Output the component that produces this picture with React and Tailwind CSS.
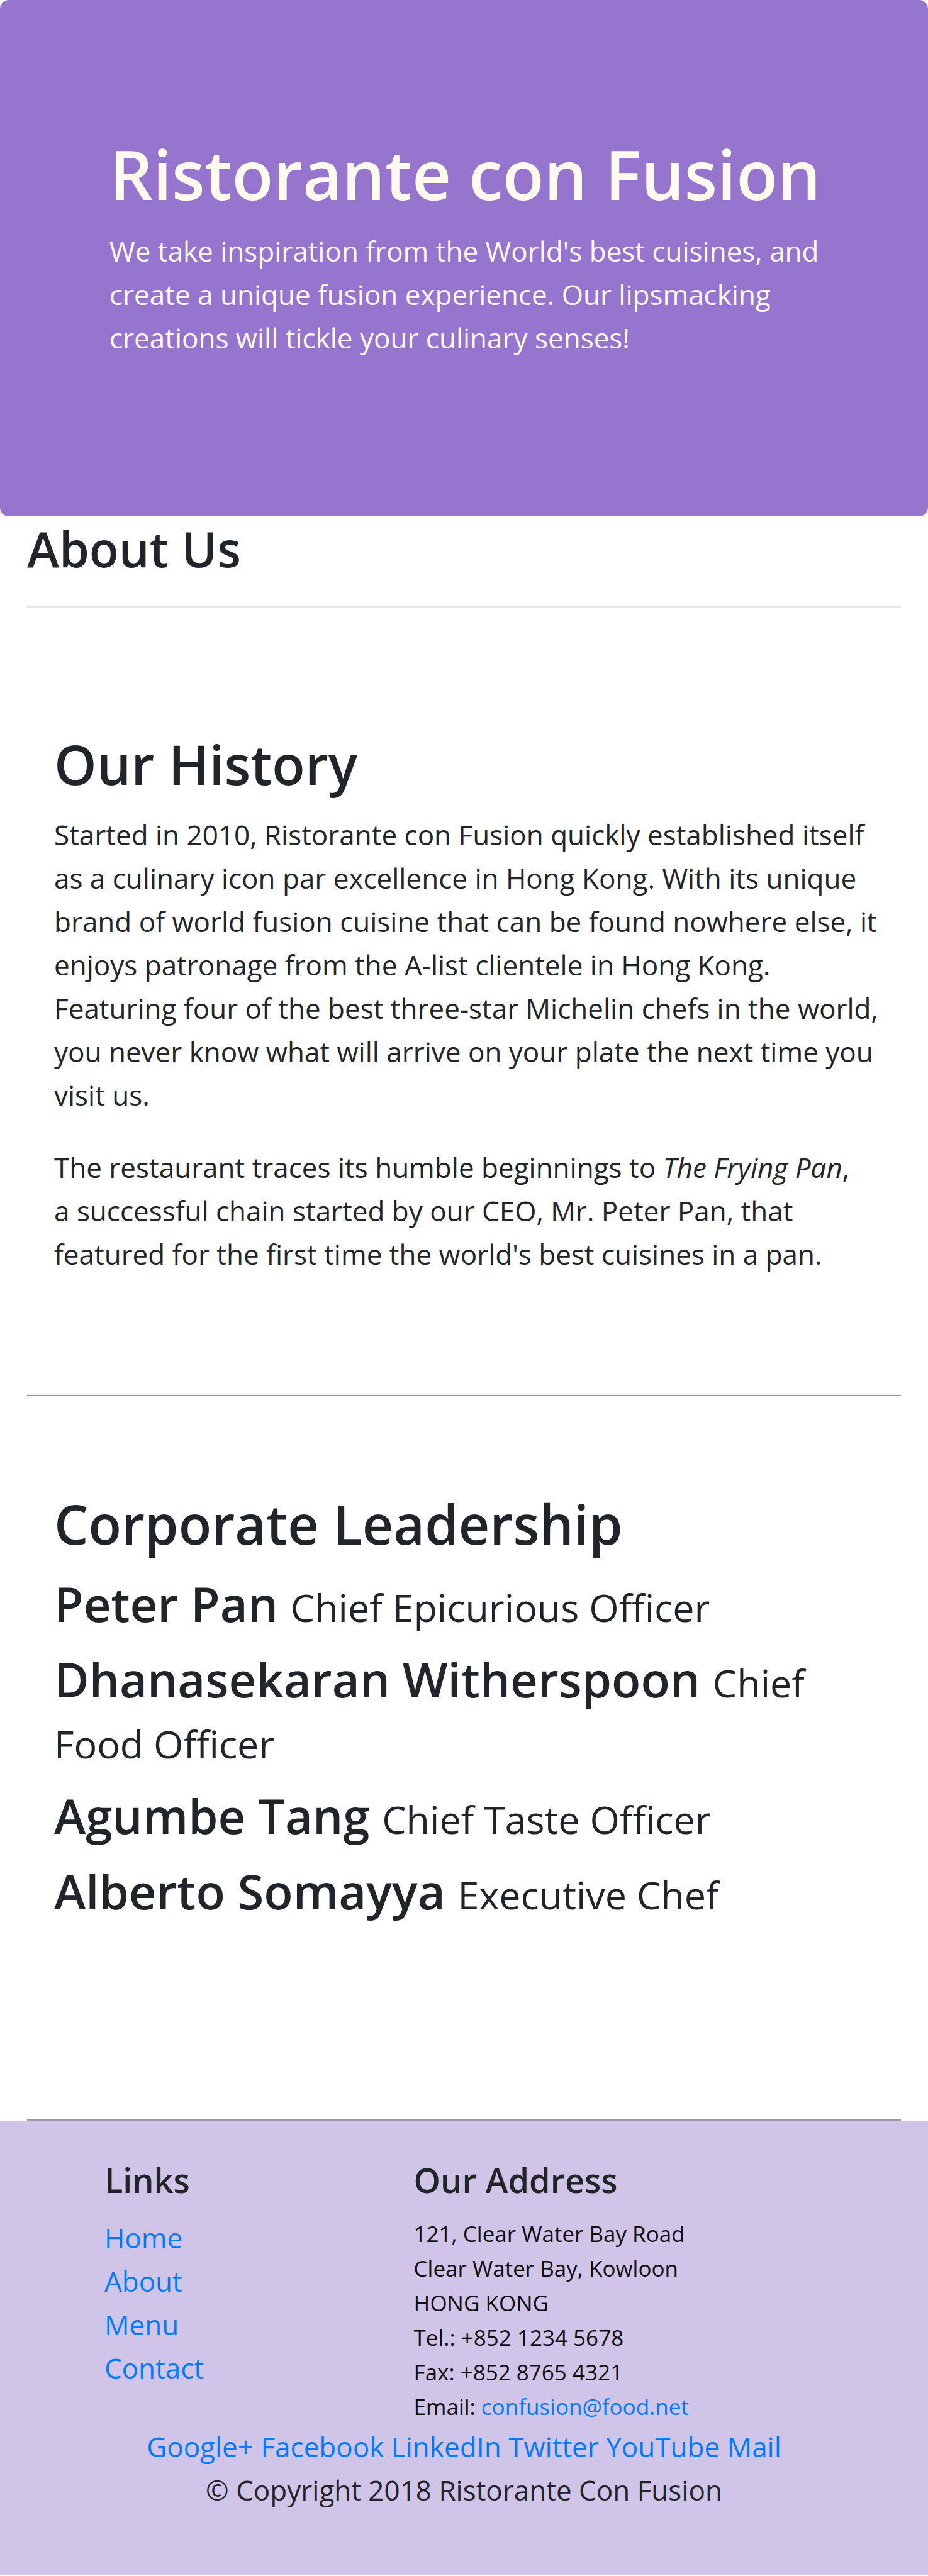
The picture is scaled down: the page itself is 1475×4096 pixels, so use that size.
const leaders = [
  { name: "Peter Pan", role: "Chief Epicurious Officer" },
  { name: "Dhanasekaran Witherspoon", role: "Chief Food Officer" },
  { name: "Agumbe Tang", role: "Chief Taste Officer" },
  { name: "Alberto Somayya", role: "Executive Chef" },
];

const siteLinks = ["Home", "About", "Menu", "Contact"];
const socialLinks = ["Google+", "Facebook", "LinkedIn", "Twitter", "YouTube", "Mail"];

function Rule() {
  return <hr className="h-[3px] border-0 border-t border-[#eeeeee] bg-[#9a9a9a]" />;
}

function Header() {
  return (
    <header className="rounded-[14px] bg-[#9575cd] pr-[150px] pl-[174px] pt-[208px] pb-[249px] text-[#fffaf0]">
      <h1 className="mb-[19px] text-[108px] leading-[138px] font-semibold">Ristorante con Fusion</h1>
      <p>
        We take inspiration from the World's best cuisines, and create a unique fusion experience.
        Our lipsmacking creations will tickle your culinary senses!
      </p>
    </header>
  );
}

function History() {
  return (
    <section className="pr-[20px] pl-[43px] pt-[193px] pb-[188px]">
      <h2 className="mb-[23px] text-[86px] leading-[110px] font-semibold">Our History</h2>
      <p className="mb-[46px]">
        Started in 2010, Ristorante con Fusion quickly established itself
        <br />
        as a culinary icon par excellence in Hong Kong. With its unique
        <br />
        brand of world fusion cuisine that can be found nowhere else, it
        <br />
        enjoys patronage from the A-list clientele in Hong Kong.
        <br />
        Featuring four of the best three-star Michelin chefs in the world,
        <br />
        you never know what will arrive on your plate the next time you
        <br />
        visit us.
      </p>
      <p>
        The restaurant traces its humble beginnings to <em>The Frying Pan</em>,
        <br />
        a successful chain started by our CEO, Mr. Peter Pan, that
        <br />
        featured for the first time the world's best cuisines in a pan.
      </p>
    </section>
  );
}

function Leadership() {
  return (
    <section className="px-[43px] pt-[148px] pb-[314px]">
      <h2 className="mb-[23px] text-[86px] leading-[110px] font-semibold">Corporate Leadership</h2>
      <div className="flex flex-col gap-[23px]">
        {leaders.map((leader) => (
          <h3 key={leader.name} className="text-[76px] leading-[97px] font-semibold">
            {leader.name} <small className="text-[61px] leading-none font-normal">{leader.role}</small>
          </h3>
        ))}
      </div>
    </section>
  );
}

function Footer() {
  return (
    <footer className="bg-[#d1c4e9] pt-[60px] pb-[101px]">
      <div className="mb-[2px] grid grid-cols-12">
        <nav className="col-span-4 col-start-2 px-[43px]">
          <h5 className="mb-[23px] text-[54px] leading-[69px] font-semibold">Links</h5>
          <ul>
            {siteLinks.map((label) => (
              <li key={label}>
                <a href="#" className="text-[#007bff]">{label}</a>
              </li>
            ))}
          </ul>
        </nav>
        <div className="col-span-7 px-[43px]">
          <h5 className="mb-[23px] text-[54px] leading-[69px] font-semibold">Our Address</h5>
          <address className="text-[35px] leading-[55px] text-[#0f0f0f] not-italic">
            121, Clear Water Bay Road
            <br />
            Clear Water Bay, Kowloon
            <br />
            HONG KONG
            <br />
            Tel.: +852 1234 5678
            <br />
            Fax: +852 8765 4321
            <br />
            Email: <a href="mailto:confusion@food.net" className="text-[#007bff]">confusion@food.net</a>
          </address>
        </div>
      </div>
      <div className="text-center text-[#007bff]">
        {socialLinks.map((label, i) => (
          <span key={label}>
            {i > 0 && " "}
            <a href="#">{label}</a>
          </span>
        ))}
      </div>
      <p className="text-center">© Copyright 2018 Ristorante Con Fusion</p>
    </footer>
  );
}

export default function App() {
  return (
    <div className="bg-white font-['Open_Sans',sans-serif] text-[44px] leading-[69px] text-[#212529]">
      <Header />
      <main className="px-[43px]">
        <h3 className="pt-[3px] pb-[43px] text-[77px] leading-[97px] font-semibold">About Us</h3>
        <hr className="h-[3px] border-0 bg-[#e5e5e5]" />
        <History />
        <Rule />
        <Leadership />
        <Rule />
      </main>
      <Footer />
    </div>
  );
}
